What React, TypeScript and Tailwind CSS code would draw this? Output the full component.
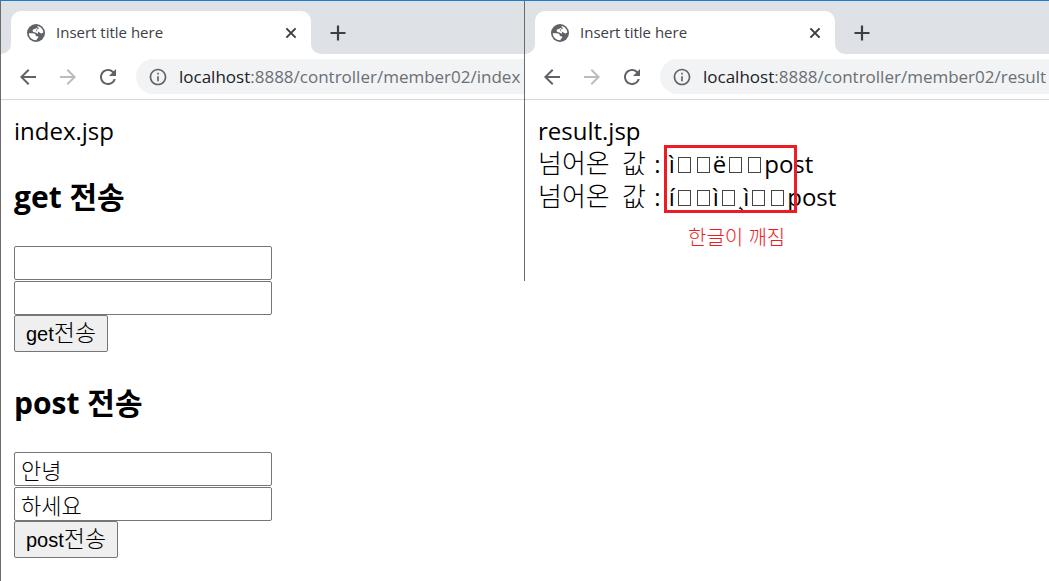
import type { ReactNode } from "react"
import { MdArrowBack, MdArrowForward, MdInfoOutline, MdRefresh } from "react-icons/md"

function GlobeIcon() {
  return (
    <svg viewBox="0 0 18 18" className="size-[18px] shrink-0" aria-hidden="true">
      <circle cx="9" cy="9" r="9" fill="#5f6368" />
      <path
        d="M10.6 1.9C14.1 2.6 16.3 5.4 16.3 8.6C15.2 9.5 14.2 9.6 13.2 9C12.5 8.5 12.4 7.8 11.3 7.7C10.2 7.6 9.6 7.2 9.6 6.4C9.6 5.5 10.4 5.3 11.2 5C12 4.6 11.9 4 11.3 3.5C10.7 3 10.4 2.4 10.6 1.9ZM1.8 9.2H5.6C7.6 9.2 8.7 10 8.7 11.2C8.7 12.1 9.5 12.2 10.4 12.2C11.3 12.3 11.5 13 11.1 13.7C10.6 14.5 9.6 14.7 9.5 16.2C5.3 16.4 1.9 13.2 1.8 9.2ZM7 5.2C5.6 5.5 5.2 6.5 5.9 7.4C6.6 8.2 8.3 7.9 9.4 8.9L10.7 9.8L11.2 8.3L9.5 7.2C8.6 6.7 8.8 5.8 9.8 5.2L11 3.6Z"
        fill="#fff"
      />
    </svg>
  )
}

function CloseIcon() {
  return (
    <svg viewBox="0 0 18 18" className="size-[18px]" stroke="currentColor" strokeWidth={2} aria-hidden="true">
      <path d="M4.4 4.4L13.6 13.6M13.6 4.4L4.4 13.6" />
    </svg>
  )
}

function PlusIcon() {
  return (
    <svg viewBox="0 0 24 24" className="size-6" stroke="currentColor" strokeWidth={2.2} aria-hidden="true">
      <path d="M12 4.5V19.5M4.5 12H19.5" />
    </svg>
  )
}

interface BrowserWindowProps {
  title: string
  host: string
  path: string
  className?: string
  children: ReactNode
}

function BrowserWindow({ title, host, path, className = "", children }: BrowserWindowProps) {
  return (
    <section
      className={`overflow-hidden border-t border-l border-t-[#1a7fd0] border-l-[#6b6b6b] bg-white ${className}`}
    >
      <div className="flex items-end bg-[#dee1e6] pt-2.5">
        <div className="size-2.5 shrink-0 bg-white">
          <div className="size-full rounded-br-[10px] bg-[#dee1e6]" />
        </div>
        <div className="flex h-[43px] w-[300px] shrink-0 items-center rounded-t-[10px] bg-white pr-[11px] pl-4">
          <GlobeIcon />
          <span className="ml-[11px] flex-1 truncate text-[15px] text-[#3c4043]">{title}</span>
          <button type="button" aria-label="Close tab" className="text-[#3c4043]">
            <CloseIcon />
          </button>
        </div>
        <div className="size-2.5 shrink-0 bg-white">
          <div className="size-full rounded-bl-[10px] bg-[#dee1e6]" />
        </div>
        <button type="button" aria-label="New tab" className="mb-[9px] ml-[5px] text-[#3c4043]">
          <PlusIcon />
        </button>
      </div>

      <nav className="flex h-[46px] items-center border-b border-[#d5d7da] pl-[15px] text-[#5f6368]">
        <button type="button" aria-label="Back">
          <MdArrowBack className="size-6" />
        </button>
        <button type="button" aria-label="Forward" disabled className="ml-4 text-[#babcbe]">
          <MdArrowForward className="size-6" />
        </button>
        <button type="button" aria-label="Reload" className="ml-4">
          <MdRefresh className="size-6" />
        </button>
        <div className="ml-4 flex h-[35px] min-w-0 flex-1 items-center overflow-hidden rounded-l-full bg-[#f1f3f4] pl-3">
          <MdInfoOutline className="size-5 shrink-0" />
          <span className="ml-[11px] text-[17px] whitespace-nowrap text-[#6b6f74]">
            <span className="text-[#202124]">{host}</span>
            {path}
          </span>
        </div>
      </nav>

      {children}
    </section>
  )
}

interface SendFormProps {
  method: string
  values: string[]
}

function SendForm({ method, values }: SendFormProps) {
  return (
    <form className="flex flex-col items-start" onSubmit={(e) => e.preventDefault()}>
      <h3 className="text-[30px] leading-9 font-bold">{method} 전송</h3>
      <div className="mt-[31px] flex flex-col gap-px">
        {values.map((value, i) => (
          <input
            key={i}
            type="text"
            aria-label={`${method} ${i + 1}`}
            defaultValue={value}
            className="h-[34px] w-[258px] rounded-xs border border-[#767676] px-1.5 font-['Liberation_Sans','Noto_Sans_CJK_KR',sans-serif] text-[22px] font-light"
          />
        ))}
      </div>
      <button
        type="submit"
        className="flex h-[37px] items-center rounded-xs border border-[#767676] bg-[#efefef] px-[11px] font-['Liberation_Sans','Noto_Sans_CJK_KR',sans-serif] text-xl font-light"
      >
        {method}
        <span className="text-[23px]">전송</span>
      </button>
    </form>
  )
}

// box shown for each byte that has no printable character
function Tofu({ count }: { count: number }) {
  return Array.from({ length: count }, (_, i) => (
    <span key={i} className="mx-[3px] inline-block h-4 w-[13px] border border-[#444]" />
  ))
}

function ReceivedValue({ children }: { children: ReactNode }) {
  return (
    <p>
      <span className="mr-1.5 text-[26px] font-light">넘어온</span>{" "}
      <span className="mr-0.5 text-[26px] font-light">값</span> <span className="mr-0.5">:</span>{" "}
      {children}
    </p>
  )
}

export default function App() {
  return (
    <main className="grid min-h-screen grid-cols-[524fr_525fr] items-start bg-white font-['Open_Sans','Noto_Sans_CJK_KR',sans-serif] text-black">
      <BrowserWindow
        title="Insert title here"
        host="localhost"
        path=":8888/controller/member02/index"
        className="min-h-screen min-w-0"
      >
        <div className="px-[13px] pt-3.5 text-2xl leading-[33px]">
          <p>index.jsp</p>
          <div className="mt-8 flex flex-col gap-[33px]">
            <SendForm method="get" values={["", ""]} />
            <SendForm method="post" values={["안녕", "하세요"]} />
          </div>
        </div>
      </BrowserWindow>

      <BrowserWindow
        title="Insert title here"
        host="localhost"
        path=":8888/controller/member02/result"
        className="min-h-[281px] min-w-0"
      >
        <div className="relative px-[13px] pt-3.5 text-2xl leading-[33px] whitespace-nowrap">
          <p>result.jsp</p>
          <ReceivedValue>
            ì<Tofu count={2} />ë<Tofu count={2} />post
          </ReceivedValue>
          <ReceivedValue>
            í<Tofu count={2} />ì<Tofu count={1} />¸ì<Tofu count={2} />post
          </ReceivedValue>
          <div className="absolute top-[45px] left-[139px] h-[68px] w-[133px] border-3 border-[#ed1c24]" />
          <p className="absolute top-[124px] left-[163px] text-xl font-light text-[#ed1c24]">
            한글이 깨짐
          </p>
        </div>
      </BrowserWindow>
    </main>
  )
}
